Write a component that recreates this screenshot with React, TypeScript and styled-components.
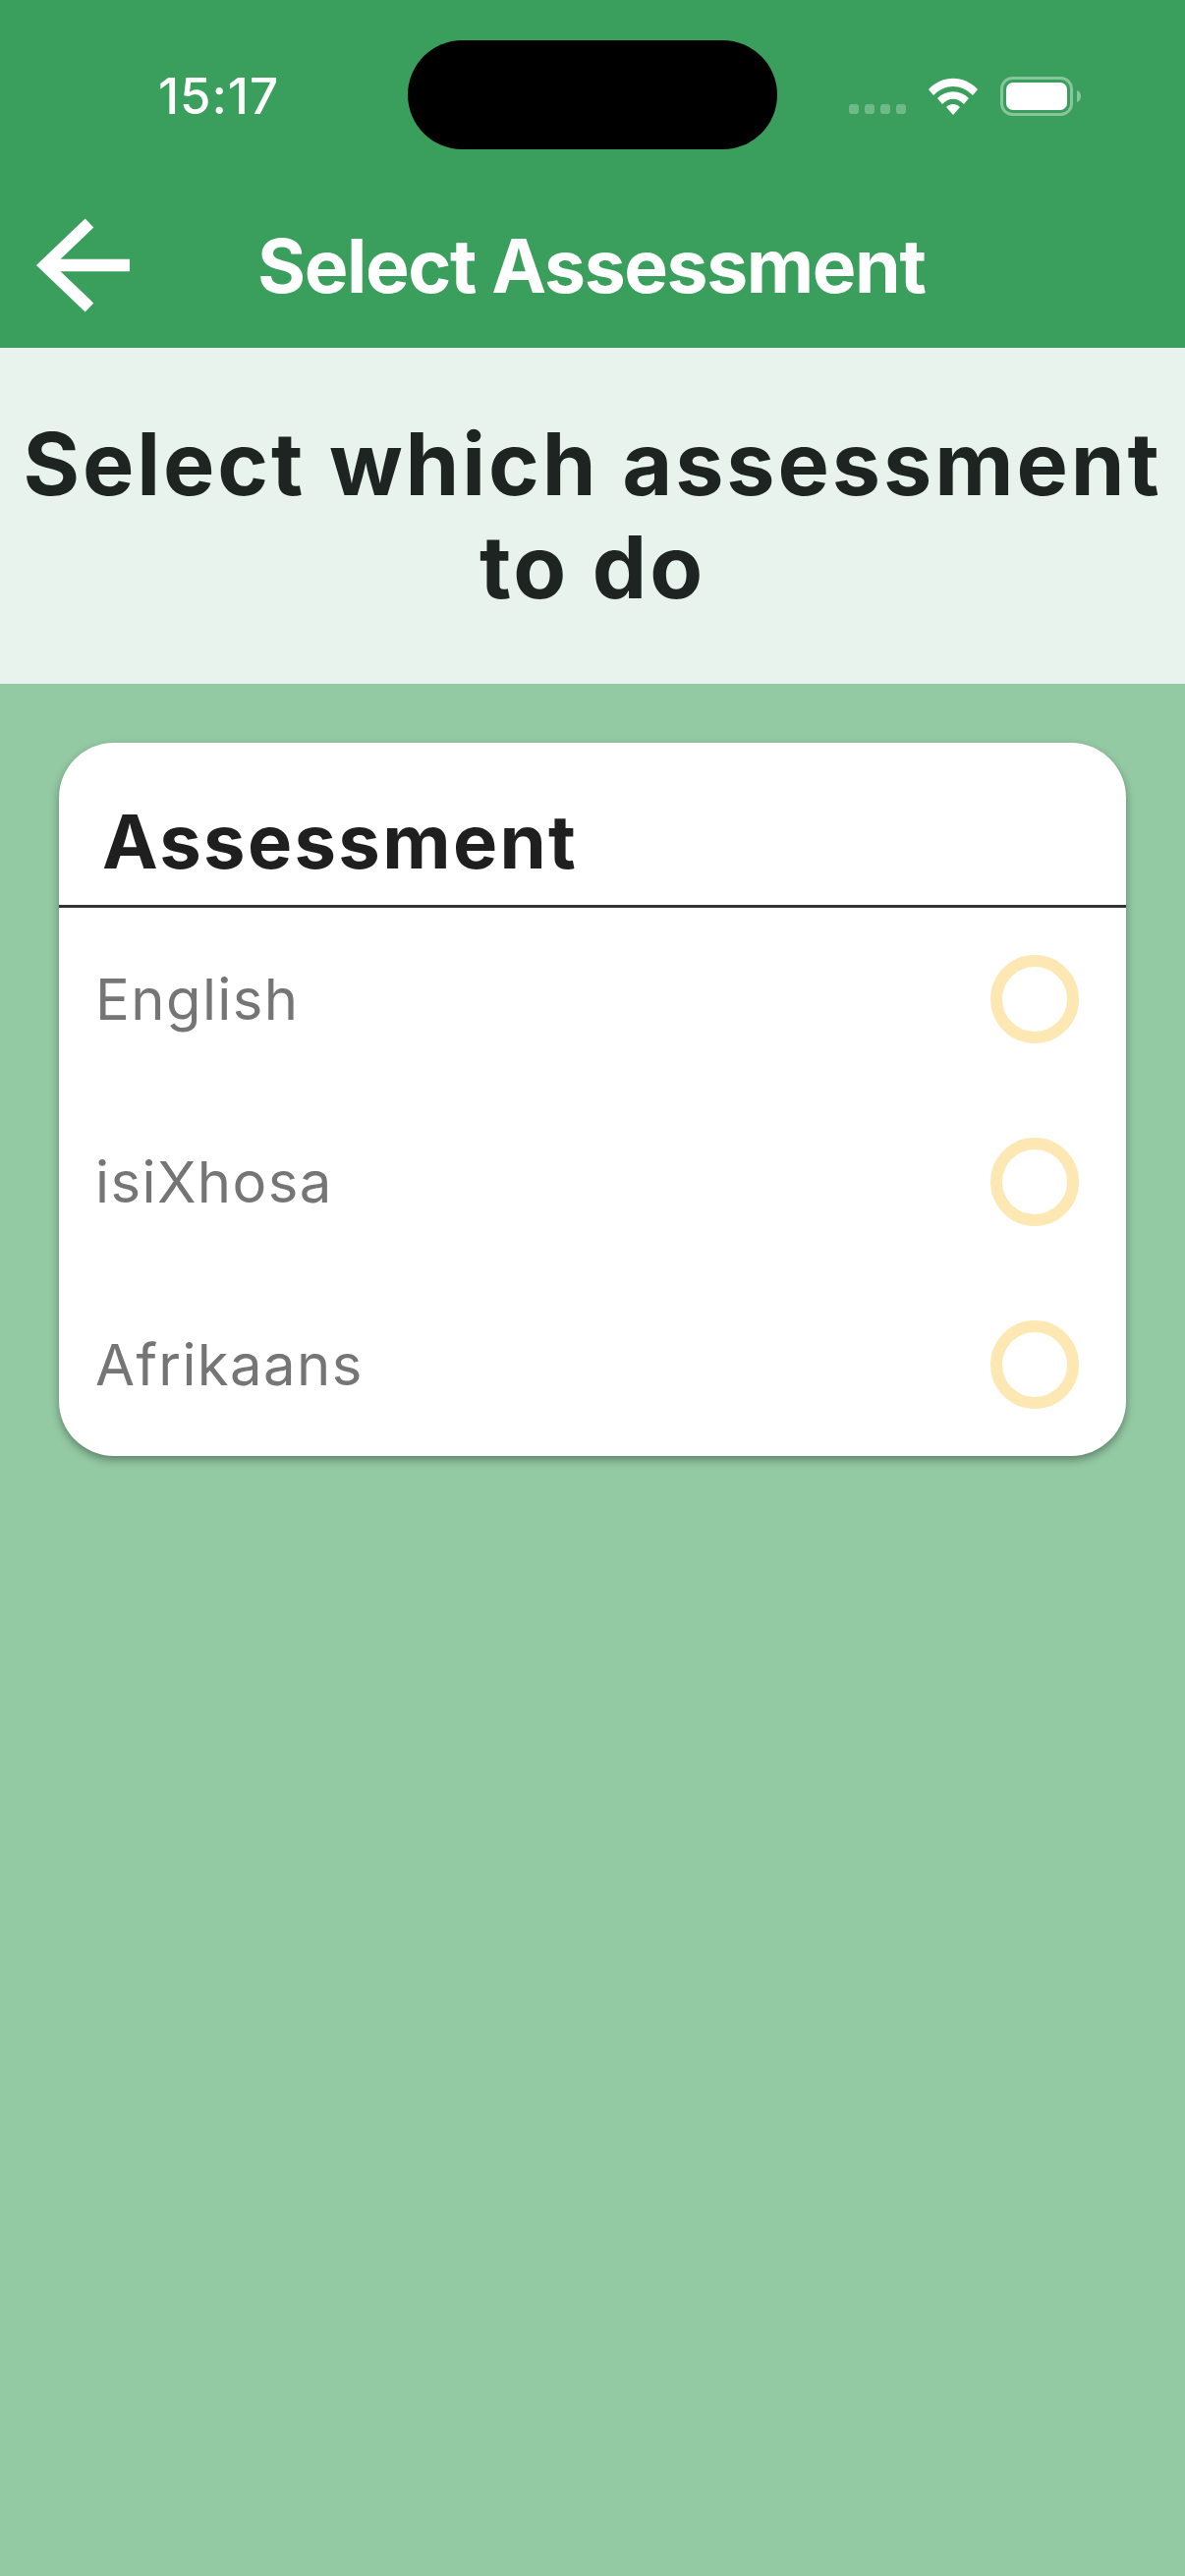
import React from "react";
import styled, { createGlobalStyle } from "styled-components";

const Global = createGlobalStyle`
  html, body { margin: 0; padding: 0; background: #93c9a3; }
  body { font-family: Inter, "Noto Sans", sans-serif; }
`;

const Page = styled.div`
  width: 1206px;
  height: 2622px;
  overflow: hidden;
  background: #93c9a3;
  display: flex;
  flex-direction: column;
`;

const Header = styled.header`
  height: 354px;
  background: #3a9e5c;
  display: flex;
  flex-direction: column;
`;

const StatusBar = styled.div`
  display: flex;
  align-items: flex-start;
  height: 190px;
  padding-top: 41px;
  box-sizing: border-box;
`;

const Time = styled.div`
  width: 254px;
  margin-left: 161px;
  font-size: 51px;
  line-height: 60px;
  margin-top: 27px;
  font-weight: 500;
  letter-spacing: 0.9px;
  color: #fff;
  height: 60px;
`;

const Island = styled.div`
  width: 376px;
  height: 111px;
  border-radius: 55.5px;
  background: #000;
`;

const Indicators = styled.div`
  margin-left: 73px;
  margin-top: 36px;
  display: flex;
  align-items: flex-start;
`;

const Dots = styled.div`
  display: flex;
  gap: 6px;
  margin-top: 29px;
  margin-right: 23px;
`;

const Dot = styled.span`
  width: 10px;
  height: 10px;
  border-radius: 3px;
  background: rgba(255, 255, 255, 0.28);
`;

const Wifi = styled.svg`
  width: 50px;
  height: 38px;
  margin-right: 23px;
  margin-top: 2px;
`;

const Battery = styled.svg`
  width: 84px;
  height: 40px;
  margin-top: 1px;
`;

const NavBar = styled.div`
  display: flex;
  align-items: center;
  height: 164px;
  padding-left: 35px;
`;

const BackArrow = styled.svg`
  width: 100px;
  height: 100px;
  flex: none;
  margin-top: -4px;
`;

const NavTitle = styled.h1`
  margin: -2px 0 0 127px;
  font-size: 75px;
  line-height: 90px;
  font-weight: 700;
  letter-spacing: -1.4px;
  color: #fff;
  white-space: nowrap;
`;

const Banner = styled.section`
  height: 342px;
  background: #e8f3ed;
  display: flex;
  align-items: center;
  justify-content: center;
`;

const BannerTitle = styled.h2`
  margin: 0;
  width: 1176px;
  text-align: center;
  font-size: 88px;
  line-height: 105px;
  font-weight: 700;
  letter-spacing: 2.9px;
  color: #1e2421;
`;

const Card = styled.section`
  margin: 60px 60px 0;
  background: #fff;
  border-radius: 56px;
  box-shadow: 0 4px 9px rgba(0, 0, 0, 0.35);
`;

const CardTitle = styled.h3`
  margin: 0;
  height: 168px;
  box-sizing: border-box;
  padding: 55px 0 0 44px;
  font-size: 76px;
  line-height: 90px;
  font-weight: 700;
  letter-spacing: 2.3px;
  color: #1f1f1f;
  border-bottom: 3px solid #333;
`;

const Row = styled.div`
  height: 186px;
  display: flex;
  align-items: center;
  justify-content: space-between;
  padding: 0 48px 0 37px;
`;

const RowLabel = styled.span`
  font-size: 58px;
  font-weight: 380;
  letter-spacing: 1.4px;
  color: #757575;
`;

const Radio = styled.span`
  width: 90px;
  height: 90px;
  box-sizing: border-box;
  border-radius: 50%;
  border: 12px solid #fde7b3;
`;

const options = ["English", "isiXhosa", "Afrikaans"];

export default function App() {
  return (
    <Page>
      <Global />
      <Header>
        <StatusBar>
          <Time>15:17</Time>
          <Island />
          <Indicators>
            <Dots>
              <Dot /><Dot /><Dot /><Dot />
            </Dots>
            <Wifi viewBox="0 0 50 38">
              <path d="M0 12 C14 -3 36 -3 50 12 L45 18 C33 6 17 6 5 18 Z M9 21 C18 12 32 12 41 21 L36 27 C29 20 21 20 14 27 Z M18 30 C22 26 28 26 32 30 L25 38 Z" fill="#fff" />
            </Wifi>
            <Battery viewBox="0 0 84 40">
              <rect x="1.5" y="1.5" width="71" height="37" rx="11" fill="none" stroke="rgba(255,255,255,0.4)" strokeWidth="3" />
              <rect x="6" y="6" width="62" height="28" rx="7" fill="#fff" />
              <path d="M78 14 C81 15 82 17 82 20 C82 23 81 25 78 26 Z" fill="rgba(255,255,255,0.4)" />
            </Battery>
          </Indicators>
        </StatusBar>
        <NavBar>
          <BackArrow viewBox="0 0 100 100">
            <path d="M97 50 H11 M56 7 L11 50 L56 93" fill="none" stroke="#fff" strokeWidth="12.5" />
          </BackArrow>
          <NavTitle>Select Assessment</NavTitle>
        </NavBar>
      </Header>
      <Banner>
        <BannerTitle>Select which assessment to do</BannerTitle>
      </Banner>
      <Card>
        <CardTitle>Assessment</CardTitle>
        {options.map((o) => (
          <Row key={o}>
            <RowLabel>{o}</RowLabel>
            <Radio />
          </Row>
        ))}
      </Card>
    </Page>
  );
}
